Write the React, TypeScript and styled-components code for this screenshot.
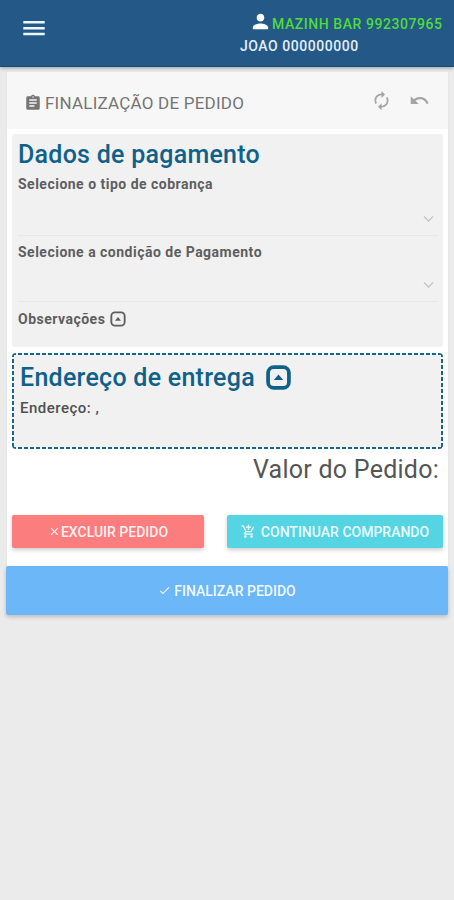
import React from "react";
import styled, { createGlobalStyle } from "styled-components";
import { MdPerson, MdAssignment, MdAutorenew, MdUndo, MdClose, MdCheck, MdAddShoppingCart } from "react-icons/md";

const GlobalStyle = createGlobalStyle`
  * { box-sizing: border-box; }
  body { margin: 0; background: #ebebeb; font-family: Roboto, "Liberation Sans", sans-serif; color: #555; }
  svg { display: block; flex: none; }
`;

const Page = styled.div`
  min-height: 900px;
  background: #ebebeb;
`;

const TopBar = styled.header`
  height: 67px;
  display: flex;
  justify-content: space-between;
  padding: 0 11px 0 20px;
  background: #235887;
  border-bottom: 1px solid #124c79;
  box-shadow: 0 1px 4px rgba(0, 0, 0, 0.35);
`;

const MenuButton = styled.button`
  height: 28px;
  margin-top: 14px;
  padding: 0;
  border: 0;
  background: none;
  color: #eaf7ff;
`;

const Account = styled.div`
  width: 203px;
  padding-top: 12px;
  font-size: 14px;
  font-weight: 500;
  white-space: nowrap;
`;

const AccountName = styled.div`
  display: flex;
  align-items: center;
  height: 24px;
  padding-left: 9px;
  color: #4fdc38;
  letter-spacing: 0.56px;
  svg { color: #fff; margin: -6px 0 0 0; }
`;

const AccountUser = styled.div`
  height: 20px;
  line-height: 20px;
  color: #e3effa;
  letter-spacing: 0.53px;
`;

const Card = styled.main`
  margin: 5px 6px 0 7px;
  height: 494px;
  background: #fff;
  box-shadow: 0 1px 2px rgba(0, 0, 0, 0.06);
`;

const CardHeader = styled.div`
  display: flex;
  align-items: center;
  height: 57px;
  padding: 5px 18px 0 17px;
  background: #f7f7f7;
  color: #757575;
`;

const CardTitle = styled.h1`
  flex: 1;
  margin: 0 0 0 3px;
  font-size: 17px;
  font-weight: 400;
  letter-spacing: 0.22px;
  white-space: nowrap;
`;

const HeaderActions = styled.div`
  display: flex;
  gap: 17px;
  margin-top: -5px;
  color: #a4a4a4;
`;

const Panel = styled.section`
  height: 213px;
  margin: 5px 5px 0;
  padding: 5px 5px 0 6px;
  border-radius: 3px;
  background: #f1f1f1;
`;

const SectionTitle = styled.h2`
  display: flex;
  align-items: center;
  gap: 11px;
  height: 30px;
  margin: 0;
  color: #10618a;
  font-size: 25px;
  font-weight: 500;
  letter-spacing: 0.26px;
  white-space: nowrap;
`;

const Field = styled.div<{ $height: number }>`
  display: flex;
  flex-direction: column;
  justify-content: space-between;
  height: ${(p) => p.$height}px;
  border-bottom: 1px solid #e8e8e8;
`;

const Label = styled.div<{ $top?: number }>`
  display: flex;
  align-items: center;
  gap: 5px;
  height: 20px;
  margin-top: ${(p) => p.$top ?? 0}px;
  color: #5e5e5e;
  font-size: 14px;
  font-weight: 700;
  letter-spacing: 0.49px;
  white-space: nowrap;
`;

const AddressLine = styled(Label)`
  color: #505050;
  font-size: 15px;
  font-weight: 500;
  letter-spacing: 0.5px;
`;

const SelectArrow = styled.div`
  display: flex;
  justify-content: flex-end;
  padding: 0 3px 12px 0;
`;

const dash = "#16658c 0 4px, transparent 4px 6px";

/* Short-dash outline painted on the border box: one repeating strip per side. */
const AddressPanel = styled.section`
  height: 96px;
  margin: 6px 5px 0;
  padding: 9px 8px 0;
  border-radius: 4px;
  background:
    repeating-linear-gradient(90deg, ${dash}) top / 100% 2px no-repeat,
    repeating-linear-gradient(90deg, ${dash}) bottom / 100% 2px no-repeat,
    repeating-linear-gradient(180deg, ${dash}) left / 2px 100% no-repeat,
    repeating-linear-gradient(180deg, ${dash}) right / 2px 100% no-repeat,
    #f1f1f1;
`;

const Total = styled.div`
  height: 41px;
  padding-right: 9px;
  color: #555;
  font-size: 25px;
  line-height: 41px;
  text-align: right;
  letter-spacing: 0.25px;
`;

const Actions = styled.div`
  display: flex;
  justify-content: space-between;
  padding: 25px 5px 0;
`;

const Button = styled.button<{ $color: string; $width?: string; $height?: number; $gap?: number; $spacing?: number }>`
  display: flex;
  align-items: center;
  justify-content: center;
  gap: ${(p) => p.$gap ?? 3}px;
  width: ${(p) => p.$width};
  height: ${(p) => p.$height ?? 33}px;
  padding: 0;
  border: 0;
  border-radius: 2px;
  background: ${(p) => p.$color};
  box-shadow: 0 2px 4px rgba(0, 0, 0, 0.2);
  color: rgba(255, 255, 255, 0.92);
  font: 500 14px Roboto, "Liberation Sans", sans-serif;
  letter-spacing: ${(p) => p.$spacing ?? 0}px;
  white-space: nowrap;
`;

const Footer = styled.div`
  padding: 0 6px;
`;

const MenuIcon = () => (
  <svg width="28" height="28" viewBox="0 0 28 28" stroke="currentColor" strokeWidth="2.6">
    <path d="M3.3 8.3h21.4M3.3 14.3h21.4M3.3 20h21.4" />
  </svg>
);

const Chevron = () => (
  <svg width="12" height="8" viewBox="0 0 12 8" fill="none" stroke="#c4c4c4" strokeWidth="1.3">
    <path d="M1 1.5 5.5 6 10 1.5" />
  </svg>
);

const CollapseIcon = ({ size, weight }: { size: number; weight: number }) => (
  <svg width={size} height={size} viewBox="0 0 24 24" fill="none" stroke="currentColor" strokeWidth={weight}>
    <rect x="2" y="2" width="20" height="20" rx="5.5" />
    <path d="m7.5 14.5 4.5-5.5 4.5 5.5z" fill="currentColor" stroke="none" />
  </svg>
);

export default function App() {
  return (
    <Page>
      <GlobalStyle />
      <TopBar>
        <MenuButton aria-label="Menu"><MenuIcon /></MenuButton>
        <Account>
          <AccountName><MdPerson size={23} />MAZINH BAR 992307965</AccountName>
          <AccountUser>JOAO 000000000</AccountUser>
        </Account>
      </TopBar>
      <Card>
        <CardHeader>
          <MdAssignment size={18} />
          <CardTitle>FINALIZAÇÃO DE PEDIDO</CardTitle>
          <HeaderActions>
            <MdAutorenew size={21} />
            <MdUndo size={21} />
          </HeaderActions>
        </CardHeader>
        <Panel>
          <SectionTitle>Dados de pagamento</SectionTitle>
          <Field $height={67}>
            <Label $top={5}>Selecione o tipo de cobrança</Label>
            <SelectArrow><Chevron /></SelectArrow>
          </Field>
          <Field $height={66}>
            <Label $top={6}>Selecione a condição de Pagamento</Label>
            <SelectArrow><Chevron /></SelectArrow>
          </Field>
          <Label $top={7}>Observações <CollapseIcon size={16} weight={2.8} /></Label>
        </Panel>
        <AddressPanel>
          <SectionTitle>Endereço de entrega <CollapseIcon size={25} weight={3.6} /></SectionTitle>
          <AddressLine $top={6}>Endereço: ,</AddressLine>
        </AddressPanel>
        <Total>Valor do Pedido:</Total>
        <Actions>
          <Button $color="#fb7d7d" $width="192px" $gap={0}><MdClose size={13} />EXCLUIR PEDIDO</Button>
          <Button $color="#55d5e3" $width="216px" $gap={5}><MdAddShoppingCart size={15} />CONTINUAR COMPRANDO</Button>
        </Actions>
      </Card>
      <Footer>
        <Button $color="#6bb7f8" $width="100%" $height={49}><MdCheck size={13} />FINALIZAR PEDIDO</Button>
      </Footer>
    </Page>
  );
}
